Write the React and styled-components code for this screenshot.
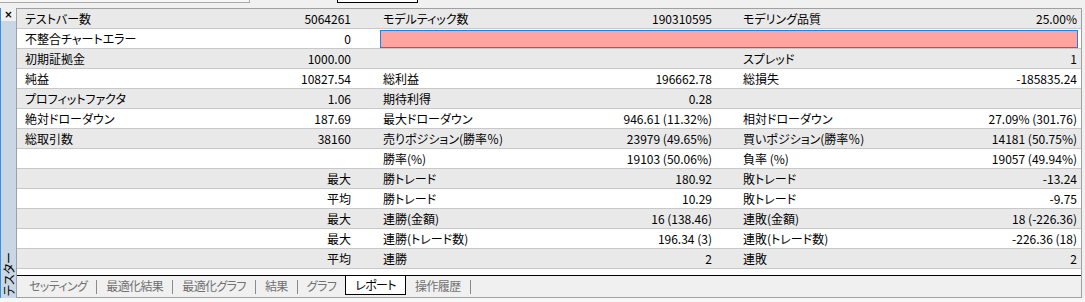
import React from 'react';
import styled, { createGlobalStyle } from 'styled-components';

const GlobalStyle = createGlobalStyle`
  body {
    margin: 0;
    background: #f0f0f0;
    font-family: 'Noto Sans CJK JP', 'Noto Sans', sans-serif;
    font-size: 12px;
    color: #000;
  }
`;

const rows = [
  ['テストバー数', '5064261', 'モデルティック数', '190310595', 'モデリング品質', '25.00%'],
  ['不整合チャートエラー', '0', null],
  ['初期証拠金', '1000.00', '', '', 'スプレッド', '1'],
  ['純益', '10827.54', '総利益', '196662.78', '総損失', '-185835.24'],
  ['プロフィットファクタ', '1.06', '期待利得', '0.28', '', ''],
  ['絶対ドローダウン', '187.69', '最大ドローダウン', '946.61 (11.32%)', '相対ドローダウン', '27.09% (301.76)'],
  ['総取引数', '38160', '売りポジション(勝率％)', '23979 (49.65%)', '買いポジション(勝率％)', '14181 (50.75%)'],
  ['', '', '勝率(%)', '19103 (50.06%)', '負率 (%)', '19057 (49.94%)'],
  ['', '最大', '勝トレード', '180.92', '敗トレード', '-13.24'],
  ['', '平均', '勝トレード', '10.29', '敗トレード', '-9.75'],
  ['', '最大', '連勝(金額)', '16 (138.46)', '連敗(金額)', '18 (-226.36)'],
  ['', '最大', '連勝(トレード数)', '196.34 (3)', '連敗(トレード数)', '-226.36 (18)'],
  ['', '平均', '連勝', '2', '連敗', '2'],
];

const tabs = ['セッティング', '最適化結果', '最適化グラフ', '結果', 'グラフ', 'レポート', '操作履歴'];
const activeTab = 5;

const Page = styled.div`
  width: 1085px;
  height: 302px;
  display: flex;
  flex-direction: column;
  overflow: hidden;
  font-feature-settings: 'palt';
`;

const TopStrip = styled.div`
  height: 8px;
  display: flex;
  align-items: flex-start;
  background: #f0f0f0;
`;

const Combo = styled.div`
  width: 249px;
  height: 2px;
  background: #f7f7f7;
  border-right: 1px solid #a8a8a8;
  border-bottom: 1px solid #a8a8a8;
`;

const Button = styled.div`
  margin-left: 87px;
  width: 79px;
  height: 2px;
  background: #fff;
  border: 1px solid #000;
  border-top: none;
`;

const Main = styled.div`
  display: flex;
  height: 290px;
`;

const SideBar = styled.div`
  width: 15px;
  border-left: 1px solid #3a8ee0;
  background: #c9d6e4;
  display: flex;
  flex-direction: column;
  justify-content: space-between;
`;

const Close = styled.div`
  height: 13px;
  background: #f0f0f0;
  font-family: 'DejaVu Sans', sans-serif;
  font-size: 10px;
  font-weight: bold;
  line-height: 13px;
  text-align: center;
`;

const SideLabel = styled.div`
  writing-mode: vertical-rl;
  text-orientation: sideways;
  transform: rotate(180deg);
  align-self: center;
  font-size: 12px;
  line-height: 14px;
  padding-top: 2px;
`;

const Content = styled.div`
  width: 1064px;
  display: flex;
  flex-direction: column;
  border: 1px solid #a0a0a0;
`;

const Table = styled.div`
  background: #fff;
  padding-bottom: 6px;
`;

const Row = styled.div`
  display: grid;
  grid-template-columns: 183px 179px 181px 180px 160px 1fr;
  height: 19px;
  border-bottom: 1px solid #c8c8c8;
  background: ${(p) => (p.$shaded ? '#e9e9e9' : '#fff')};
  line-height: 19px;
  white-space: nowrap;
`;

const Label = styled.div`
  padding-left: ${(p) => p.$pad}px;
`;

const Value = styled.div`
  text-align: right;
  padding-right: ${(p) => p.$pad}px;
`;

const ErrorBar = styled.div`
  grid-column: 3 / -1;
  margin: 1px 3px 0 1px;
  height: 16px;
  background: #ffa3a3;
  border: 1px solid #2480d8;
`;

const TabBar = styled.div`
  height: 20px;
  display: flex;
  align-items: flex-start;
  padding-left: 3px;
  border-top: 1px solid #000;
  background: #f0f0f0;
`;

const Tab = styled.div`
  height: 18px;
  line-height: 18px;
  padding: 0 9px;
  letter-spacing: -0.6px;
  color: ${(p) => (p.$active ? '#000' : '#707070')};
  background: ${(p) => (p.$active ? '#fff' : 'transparent')};
  border: ${(p) => (p.$active ? '1px solid #000' : 'none')};
  border-top: none;
  margin-top: ${(p) => (p.$active ? '0' : '1px')};
`;

const Sep = styled.div`
  width: 1px;
  height: 14px;
  margin-top: 4px;
  background: #8a8a8a;
`;

const Footer = styled.div`
  flex: 1;
  background: #f7f7f7;
`;

const App = () => (
  <>
    <GlobalStyle />
    <Page>
      <TopStrip>
        <Combo />
        <Button />
      </TopStrip>
      <Main>
        <SideBar>
          <Close>×</Close>
          <SideLabel>テスター</SideLabel>
        </SideBar>
        <Content>
          <Table>
            {rows.map((r, i) => (
              <Row key={i} $shaded={i % 2 === 0}>
                <Label $pad={8}>{r[0]}</Label>
                <Value $pad={28}>{r[1]}</Value>
                {r[2] === null ? (
                  <ErrorBar />
                ) : (
                  <>
                    <Label $pad={4}>{r[2]}</Label>
                    <Value $pad={28}>{r[3]}</Value>
                    <Label $pad={3}>{r[4]}</Label>
                    <Value $pad={4}>{r[5]}</Value>
                  </>
                )}
              </Row>
            ))}
          </Table>
          <TabBar>
            {tabs.map((t, i) => (
              <React.Fragment key={t}>
                <Tab $active={i === activeTab}>{t}</Tab>
                {i !== activeTab && i + 1 !== activeTab && <Sep />}
              </React.Fragment>
            ))}
          </TabBar>
        </Content>
      </Main>
      <Footer />
    </Page>
  </>
);

export default App;
